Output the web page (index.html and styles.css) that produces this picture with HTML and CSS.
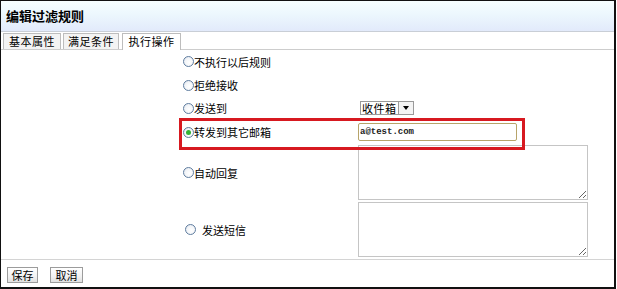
FILE: index.html
```html
<!DOCTYPE html>
<html lang="zh-CN">
<head>
<meta charset="utf-8">
<title>编辑过滤规则</title>
<link rel="stylesheet" href="styles.css">
</head>
<body>
<div class="panel">
  <div class="titlebar">编辑过滤规则</div>
  <div class="tabs">
    <span class="tab tab-basic">基本属性</span>
    <span class="tab tab-cond">满足条件</span>
    <span class="tab tab-action active">执行操作</span>
  </div>
  <div class="form">
    <div class="row r1">
      <label class="opt"><span class="radio"></span>不执行以后规则</label>
      <div class="ctl"></div>
    </div>
    <div class="row r2">
      <label class="opt"><span class="radio"></span>拒绝接收</label>
      <div class="ctl"></div>
    </div>
    <div class="row r3">
      <label class="opt"><span class="radio"></span>发送到</label>
      <div class="ctl"><span class="select"><span class="sel-text">收件箱</span><span class="sel-btn"><span class="arrow"></span></span></span></div>
    </div>
    <div class="row r4">
      <label class="opt"><span class="radio checked"></span>转发到其它邮箱</label>
      <div class="ctl"><input class="email" type="text" value="a@test.com"></div>
      <div class="highlight"></div>
    </div>
    <div class="row r5">
      <label class="opt"><span class="radio"></span>自动回复</label>
      <div class="ctl"><textarea class="area"></textarea></div>
    </div>
    <div class="row r6">
      <label class="opt opt-spaced"><span class="radio"></span>发送短信</label>
      <div class="ctl"><textarea class="area"></textarea></div>
    </div>
  </div>
  <div class="footer">
    <button class="btn btn-save" type="button">保存</button>
    <button class="btn btn-cancel" type="button">取消</button>
  </div>
</div>
</body>
</html>
```

FILE: styles.css
```css
html, body {
  margin: 0;
  padding: 0;
  background: #fff;
}

body {
  font-family: "Noto Sans CJK SC", "DejaVu Sans", sans-serif;
  font-size: 11px;
  color: #000;
}

.panel {
  width: 616px;
  height: 289px;
  box-sizing: border-box;
  border-style: solid;
  border-color: #111;
  border-width: 1px 2px 2px 1px;
  display: flex;
  flex-direction: column;
}

.titlebar {
  height: 30px;
  line-height: 30px;
  padding-left: 5px;
  font-size: 13px;
  font-weight: bold;
  background: linear-gradient(to bottom, #f6feff 0%, #ecf7fd 45%, #e2eafb 100%);
  border-bottom: 1px solid #c9ced6;
}

.tabs {
  height: 16px;
  padding: 1px 0 0 2px;
  display: flex;
  border-bottom: 1px solid #cdcdcd;
}

.tab {
  height: 16px;
  box-sizing: border-box;
  border: 1px solid #bdbdbd;
  border-bottom: none;
  background: #f3f3f3;
  text-align: center;
  line-height: 15px;
  letter-spacing: 0.5px;
}

.tab-basic { width: 58px; }
.tab-cond { width: 56px; margin-left: 2px; }
.tab-action { width: 59px; margin-left: 3px; }

.tab.active {
  background: #fff;
  height: 17px;
}

.form {
  padding: 0 0 1px 182px;
  display: flex;
  flex-direction: column;
}

.row {
  display: grid;
  grid-template-columns: 175px auto;
  align-items: center;
}

.r1 { height: 23px; }
.r2 { height: 24px; }
.r3 { height: 22px; }
.r4 {
  height: 25px;
  align-items: start;
  padding-top: 4px;
  box-sizing: border-box;
  position: relative;
}
.r5, .r6 {
  height: 57px;
  padding: 1px 0;
  box-sizing: border-box;
}

.opt {
  display: flex;
  align-items: center;
  height: 18px;
  line-height: 18px;
  white-space: nowrap;
}

.opt-spaced .radio {
  margin-left: 2px;
  margin-right: 6px;
}

.radio {
  width: 11px;
  height: 11px;
  box-sizing: border-box;
  border: 1px solid #5f7d9f;
  border-radius: 50%;
  background: radial-gradient(circle at 60% 60%, #ffffff 0%, #f4f6f9 50%, #d9dfe8 100%);
  position: relative;
  flex: none;
}

.radio.checked::after {
  content: "";
  position: absolute;
  left: 2px;
  top: 2px;
  width: 5px;
  height: 5px;
  border-radius: 50%;
  background: #33b233;
}

.ctl {
  display: flex;
  align-items: center;
}

.select {
  margin-left: 2px;
  height: 14px;
  display: inline-flex;
  border: 1px solid #9a9a9a;
  box-sizing: border-box;
  background: #fff;
}

.sel-text {
  width: 36px;
  padding-left: 1px;
  line-height: 12px;
  font-size: 11px;
  letter-spacing: 0.5px;
}

.sel-btn {
  width: 14px;
  border-left: 1px solid #9a9a9a;
  display: flex;
  align-items: center;
  justify-content: center;
  background: #f4f4f4;
}

.arrow {
  width: 0;
  height: 0;
  border-left: 3px solid transparent;
  border-right: 3px solid transparent;
  border-top: 4px solid #000;
}

.email {
  width: 159px;
  height: 18px;
  box-sizing: border-box;
  margin: 0;
  padding: 0 0 0 1px;
  border: 1px solid #b7a46a;
  border-radius: 2px;
  font-family: "Liberation Mono", monospace;
  font-size: 9px;
  font-weight: bold;
  color: #222;
  background: #fff;
  outline: none;
}

.area {
  width: 230px;
  height: 55px;
  box-sizing: border-box;
  margin: 0;
  padding: 2px;
  border: 1px solid #c5c5c5;
  font-family: "Liberation Sans", sans-serif;
  font-size: 11px;
  display: block;
}

.highlight {
  position: absolute;
  left: -4px;
  top: -1px;
  width: 346px;
  height: 32px;
  box-sizing: border-box;
  border: 3px solid #d71920;
  pointer-events: none;
  z-index: 2;
}

.footer {
  flex: 1;
  border-top: 1px solid #d4d4d4;
  padding: 7px 0 0 6px;
  display: flex;
  align-items: flex-start;
}

.btn {
  height: 16px;
  margin: 0;
  padding: 0;
  border: 1px solid #9c9c9c;
  border-radius: 0;
  background: linear-gradient(to bottom, #ffffff 0%, #f2f2f2 60%, #e0e0e0 100%);
  font-family: "Noto Sans CJK SC", sans-serif;
  font-size: 11px;
  line-height: 14px;
  color: #000;
  white-space: nowrap;
  text-align: center;
}

.btn-save { width: 31px; }
.btn-cancel { width: 33px; margin-left: 12px; }
```
